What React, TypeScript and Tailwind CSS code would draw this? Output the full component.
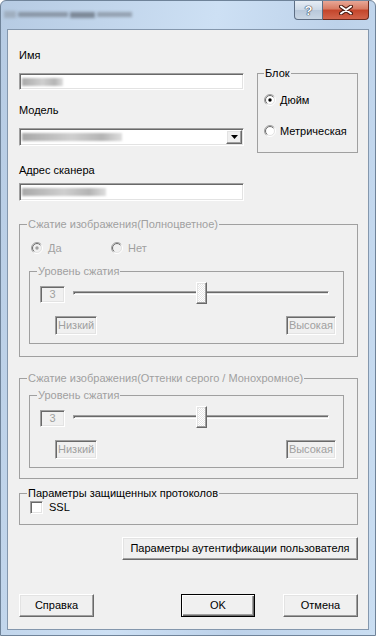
import React from 'react'

// classic 3D borders
const sunken =
  'border border-t-[#a0a0a0] border-l-[#a0a0a0] border-b-white border-r-white shadow-[inset_1px_1px_0_#696969,inset_-1px_-1px_0_#e3e3e3]'
const raised =
  'border border-t-white border-l-white border-b-[#696969] border-r-[#696969] shadow-[inset_-1px_-1px_0_#a0a0a0,inset_1px_1px_0_#e3e3e3]'
const gray = 'text-[#a0a0a0]'

function Radio({ checked, disabled }: { checked?: boolean; disabled?: boolean }) {
  return (
    <svg width="12" height="12" viewBox="0 0 12 12" className="shrink-0">
      <defs>
        <linearGradient id="rOut" x1="0" y1="0" x2="1" y2="1">
          <stop offset="0.45" stopColor="#a0a0a0" />
          <stop offset="0.6" stopColor="#ffffff" />
        </linearGradient>
        <linearGradient id="rIn" x1="0" y1="0" x2="1" y2="1">
          <stop offset="0.45" stopColor="#696969" />
          <stop offset="0.6" stopColor="#e3e3e3" />
        </linearGradient>
      </defs>
      <circle cx="6" cy="6" r="5.5" fill="none" stroke="url(#rOut)" />
      <circle cx="6" cy="6" r="4.5" fill={disabled ? '#f0f0f0' : '#ffffff'} stroke="url(#rIn)" />
      {checked && <circle cx="6" cy="6" r="1.7" fill={disabled ? '#a0a0a0' : '#000000'} />}
    </svg>
  )
}

function Group({
  title,
  disabled,
  legendClass = 'ml-[7px]',
  className = '',
  children,
}: {
  title: string
  disabled?: boolean
  legendClass?: string
  className?: string
  children: React.ReactNode
}) {
  return (
    <fieldset className={`border border-[#a0a0a0] ${className}`}>
      <legend className={`${legendClass} px-[1px] leading-[14px] ${disabled ? gray : ''}`}>{title}</legend>
      {children}
    </fieldset>
  )
}

function Level() {
  return (
    <Group title="Уровень сжатия" disabled className="ml-[9px] w-[315px] pb-[8px]">
      <div className="mt-[4px] flex items-start">
        <div className={`${sunken} ml-[10px] mt-[4px] flex h-[17px] w-[25px] items-center justify-center leading-none ${gray}`}>
          3
        </div>
        <div className="relative ml-[8px] h-[22px] w-[256px]">
          <div className={`absolute left-0 right-0 top-[9px] h-[4px] ${sunken}`} />
          <div
            className={`absolute left-[123px] top-0 h-[22px] w-[11px] ${raised} bg-[repeating-conic-gradient(#ffffff_0_25%,#e6e6e6_0_50%)] bg-[length:2px_2px]`}
          />
        </div>
      </div>
      <div className="mt-[12px] flex justify-between pl-[25px] pr-[7px]">
        <span className={`${sunken} h-[19px] px-[2px] leading-[17px] ${gray}`}>Низкий</span>
        <span className={`${sunken} h-[19px] px-[2px] leading-[17px] ${gray}`}>Высокая</span>
      </div>
    </Group>
  )
}

function Blur({ w }: { w: number }) {
  return (
    <div
      className="h-[8px] bg-[linear-gradient(90deg,#a9a9a9,#cfcfcf_50%,#b4b4b4_80%,#dedede)] blur-[1.3px]"
      style={{ width: w }}
    />
  )
}

export default function App() {
  return (
    <div className="h-[636px] w-[376px] overflow-hidden rounded-t-[6px] border border-[#6f8399] bg-[linear-gradient(100deg,#b6cbe3_0%,#cde0f4_45%,#bdd2ea_70%,#cadef2_100%)] font-['Liberation_Sans',Arial,sans-serif] text-[11px] text-black">
      {/* title bar */}
      <div className="flex h-[28px] items-start justify-between">
        <div className="ml-[3px] mt-[10px] flex items-center gap-[2px] opacity-80">
          <div className="h-[7px] w-[12px] bg-[#9aa7b6] blur-[1.5px]" />
          <div className="h-[5px] w-[50px] bg-[#7d8896] blur-[1.5px]" />
          <div className="h-[6px] w-[25px] bg-[#6c7683] blur-[1.5px]" />
          <div className="h-[5px] w-[35px] bg-[#8894a2] blur-[1.5px]" />
        </div>
        <div className="mr-[6px] flex">
          <div className="flex h-[19px] w-[29px] items-center justify-center rounded-bl-[4px] border border-t-0 border-[#5d6e84] bg-[linear-gradient(180deg,#e6edf5_0%,#ccd8e6_50%,#b8c8da_51%,#c9d6e4_100%)] text-[13px] font-bold leading-none text-white [text-shadow:0_0_1px_#2c3a4c,0_0_1px_#2c3a4c,0_0_1px_#2c3a4c]">
            ?
          </div>
          <div className="flex h-[19px] w-[46px] items-center justify-center rounded-br-[4px] border border-l-0 border-t-0 border-[#6b2a1e] bg-[linear-gradient(180deg,#e8a796_0%,#d77a62_45%,#c4452b_50%,#d2644b_100%)]">
            <svg width="14" height="10" viewBox="0 0 14 10">
              <path d="M2 1.5 L12 8.5 M12 1.5 L2 8.5" stroke="#4b1c12" strokeWidth="4" strokeLinecap="round" />
              <path d="M2 1.5 L12 8.5 M12 1.5 L2 8.5" stroke="#ffffff" strokeWidth="2" strokeLinecap="round" />
            </svg>
          </div>
        </div>
      </div>

      {/* client area */}
      <div className="ml-[6px] flex h-[601px] w-[362px] flex-col border border-[#8497ad] bg-[#f0f0f0] pl-[11px] pr-[10px] pt-[18px]">
        <div className="flex items-start gap-[13px]">
          <div className="flex w-[225px] flex-col">
            <div className="leading-[14px]">Имя</div>
            <div className={`${sunken} mt-[11px] flex h-[17px] items-center bg-white pl-[2px]`}>
              <Blur w={41} />
            </div>
            <div className="mt-[13px] leading-[14px]">Модель</div>
            <div className={`${sunken} mt-[11px] flex h-[18px] items-center justify-between bg-white p-[1px] pl-[2px]`}>
              <Blur w={100} />
              <div className={`${raised} flex h-[14px] w-[16px] items-center justify-center bg-[#f0f0f0]`}>
                <svg width="7" height="4" viewBox="0 0 7 4">
                  <path d="M0 0 H7 L3.5 4 Z" fill="#000" />
                </svg>
              </div>
            </div>
            <div className="mt-[17px] leading-[14px]">Адрес сканера</div>
            <div className={`${sunken} mt-[6px] flex h-[18px] items-center bg-white pl-[2px]`}>
              <Blur w={84} />
            </div>
          </div>

          <Group title="Блок" legendClass="ml-[6px]" className="mt-[18px] w-[101px] pb-[14px]">
            <div className="mt-[13px] flex h-[14px] items-center gap-[4px] pl-[6px]">
              <Radio checked />
              <span className="leading-[14px]">Дюйм</span>
            </div>
            <div className="mt-[17px] flex h-[14px] items-center gap-[4px] pl-[6px]">
              <Radio />
              <span className="leading-[14px]">Метрическая</span>
            </div>
          </Group>
        </div>

        <Group title="Сжатие изображения(Полноцветное)" disabled className="mt-[16px] pb-[12px]">
          <div className="mt-[10px] flex h-[14px] items-center pl-[11px]">
            <div className="flex w-[80px] items-center gap-[5px]">
              <Radio checked disabled />
              <span className={gray}>Да</span>
            </div>
            <div className="flex items-center gap-[5px]">
              <Radio disabled />
              <span className={gray}>Нет</span>
            </div>
          </div>
          <div className="mt-[9px]">
            <Level />
          </div>
        </Group>

        <Group title="Сжатие изображения(Оттенки серого / Монохромное)" disabled className="mt-[14px] pb-[10px]">
          <div className="mt-[3px]">
            <Level />
          </div>
        </Group>

        <Group title="Параметры защищенных протоколов" className="mt-[7px] pb-[10px]">
          <div className="flex h-[14px] items-center gap-[6px] pl-[10px]">
            <div className={`${sunken} h-[13px] w-[13px] bg-white`} />
            <span>SSL</span>
          </div>
        </Group>

        <button className={`${raised} mt-[12px] h-[23px] w-[236px] self-end whitespace-nowrap bg-[#f0f0f0]`}>
          Параметры аутентификации пользователя
        </button>

        <div className="mt-[34px] flex">
          <button className={`${raised} h-[23px] w-[75px] bg-[#f0f0f0]`}>Справка</button>
          <button className="ml-auto h-[23px] w-[74px] border border-black bg-[#f0f0f0] shadow-[inset_1px_1px_0_#fff,inset_-1px_-1px_0_#696969,inset_-2px_-2px_0_#a0a0a0]">
            OK
          </button>
          <button className={`${raised} ml-[28px] h-[23px] w-[75px] bg-[#f0f0f0]`}>Отмена</button>
        </div>
      </div>
    </div>
  )
}
